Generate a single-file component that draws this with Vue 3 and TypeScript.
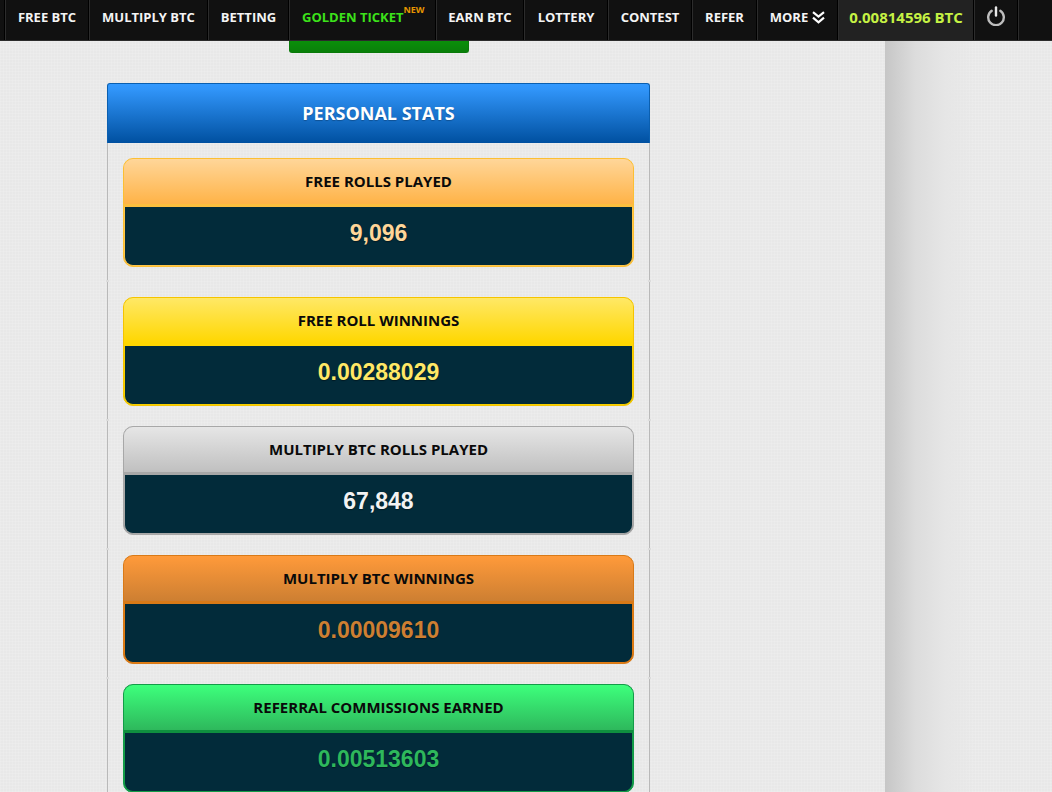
<script setup lang="ts">
interface NavItem { label: string; width: number }
interface Stat { title: string; value: string; tone: string; top: number }

const navItems: NavItem[] = [
  { label: 'FREE BTC', width: 84 },
  { label: 'MULTIPLY BTC', width: 119 },
  { label: 'BETTING', width: 81 },
]
const navItems2: NavItem[] = [
  { label: 'EARN BTC', width: 88 },
  { label: 'LOTTERY', width: 84 },
  { label: 'CONTEST', width: 84 },
  { label: 'REFER', width: 65 },
]
const stats: Stat[] = [
  { title: 'FREE ROLLS PLAYED', value: '9,096', tone: 'peach', top: 15 },
  { title: 'FREE ROLL WINNINGS', value: '0.00288029', tone: 'yellow', top: 16 },
  { title: 'MULTIPLY BTC ROLLS PLAYED', value: '67,848', tone: 'silver', top: 6 },
  { title: 'MULTIPLY BTC WINNINGS', value: '0.00009610', tone: 'bronze', top: 6 },
  { title: 'REFERRAL COMMISSIONS EARNED', value: '0.00513603', tone: 'green', top: 6 },
]
</script>

<template>
  <div class="page">
    <nav class="nav">
      <a v-for="n in navItems" :key="n.label" class="cell" :style="{ width: n.width + 'px' }">{{ n.label }}</a>
      <a class="cell gold"><span class="gold-text">GOLDEN TICKET<sup class="new">NEW</sup></span></a>
      <a v-for="n in navItems2" :key="n.label" class="cell" :style="{ width: n.width + 'px' }">{{ n.label }}</a>
      <a class="cell more">
        MORE
        <svg class="chev" width="13" height="13" viewBox="0 0 13 13" fill="none" stroke="#fff" stroke-width="2.200">
          <path d="M1 1.200l5.500 4.300 5.500-4.300" />
          <path d="M1 6.700l5.500 4.600 5.500-4.600" />
        </svg>
      </a>
      <a class="cell balance">0.00814596 BTC</a>
      <a class="cell power">
        <svg width="20" height="20" viewBox="0 0 20 20" fill="none" stroke-width="2.400" stroke-linecap="round">
          <path d="M5.700 4.800a7.800 7.800 0 1 0 8.600 0" stroke="#bdbdbd" />
          <path d="M10 1.500v8" stroke="#e8e8e8" />
        </svg>
      </a>
    </nav>

    <div class="body">
      <main class="main">
        <div class="tab"></div>
        <section class="panel">
          <h2 class="panel-title">PERSONAL STATS</h2>
          <div v-for="s in stats" :key="s.title" class="row" :style="{ paddingTop: s.top + 'px' }">
            <div class="card" :class="s.tone">
              <div class="card-head">{{ s.title }}</div>
              <div class="card-value">{{ s.value }}</div>
            </div>
          </div>
        </section>
      </main>
      <aside class="side"></aside>
    </div>
  </div>
</template>

<style>
html, body { margin: 0; height: 100%; overflow: hidden; background: #e8e8e8; }
</style>

<style scoped>
.page {
  width: 1052px;
  height: 792px;
  overflow: hidden;
  font-family: "Open Sans", "Liberation Sans", sans-serif;
  background-color: #e8e8e8;
  background-image: repeating-linear-gradient(0deg, rgba(255,255,255,.12) 0 1px, transparent 1px 3px),
    repeating-linear-gradient(90deg, rgba(255,255,255,.12) 0 1px, transparent 1px 3px);
}
.nav {
  height: 40px;
  display: flex;
  background: #111;
  border-bottom: 1px solid #2b2b2b;
  padding-left: 5px;
}
.cell {
  box-sizing: border-box;
  height: 40px;
  flex: none;
  display: flex;
  align-items: center;
  justify-content: center;
  border-left: 1px solid #2c2c2c;
  box-shadow: -1px 0 0 #000;
  color: #f4f4f4;
  font-size: 13px;
  font-weight: 700;
  white-space: nowrap;
  padding: 0 1px 6px 0;
}
.gold { width: 147px; justify-content: flex-start; padding-left: 12px; }
.gold-text { color: #3ce21a; position: relative; }
.new {
  position: absolute;
  left: 100%;
  top: -3px;
  color: #e69500;
  font-size: 9px;
  line-height: 10px;
}
.more { width: 81px; gap: 4px; }
.chev { margin-top: 1px; }
.balance { width: 136px; background: #222; color: #c6f244; font-size: 15px; }
.power { width: 44px; padding: 0 2px 9px 0; }
.nav::after {
  content: "";
  width: 1px;
  height: 40px;
  background: #2c2c2c;
  box-shadow: -1px 0 0 #000;
}
.body { display: flex; height: 751px; }
.main { width: 885px; flex: none; }
.side { flex: 1; background: linear-gradient(90deg, #c6c6c6 0, #dcdcdc 30px, #e6e6e6 60px, transparent 90px); }
.tab {
  width: 180px;
  height: 12px;
  margin-left: 289px;
  box-sizing: border-box;
  background: linear-gradient(#0a8f0a, #0a800a);
  border: 1px solid #0a7a0a;
  border-top: 0;
  border-radius: 0 0 3px 3px;
}
.panel { width: 543px; margin: 30px 0 0 107px; }
.panel-title {
  margin: 0;
  height: 60px;
  box-sizing: border-box;
  display: flex;
  align-items: center;
  justify-content: center;
  color: #fff;
  font-size: 18px;
  font-weight: 700;
  padding-bottom: 2px;
  border: 1px solid #0a5fb0;
  border-bottom: 0;
  border-radius: 3px 3px 0 0;
  background: linear-gradient(#3399ff, #3094f8 10%, #0050a0);
  text-shadow: 0 1px 1px rgba(0,0,0,.25);
}
.row {
  position: relative;
  box-sizing: border-box;
  padding: 0 15px 14px;
  border-left: 1px solid #b9b9b9;
  border-right: 1px solid #b9b9b9;
}
.row + .row::before,
.row + .row::after {
  content: "";
  position: absolute;
  top: -1px;
  width: 3px;
  height: 2px;
  background: #dcdcdc;
}
.row + .row::before { left: -2px; }
.row + .row::after { right: -2px; }
.card {
  width: 511px;
  height: 109px;
  box-sizing: border-box;
  border: 1px solid;
  border-radius: 10px;
  overflow: hidden;
  display: flex;
  flex-direction: column;
}
.card-head {
  flex: none;
  height: 43px;
  padding-bottom: 2px;
  box-sizing: content-box;
  display: flex;
  align-items: center;
  justify-content: center;
  color: #0a0a0a;
  font-size: 15px;
  font-weight: 700;
  border-bottom: 3px solid;
}
.card-value {
  flex: 1;
  box-sizing: border-box;
  display: flex;
  align-items: center;
  justify-content: center;
  background: #022b3a;
  border: 1px solid;
  border-top: 0;
  border-radius: 0 0 9px 9px;
  font-family: "Liberation Sans", Arial, sans-serif;
  font-size: 23px;
  font-weight: 700;
  padding-bottom: 6px;
  text-shadow: 0 1px 1px rgba(0,0,0,.4);
}
.peach { border-color: #fcbf33; background: #ffc64a; }
.peach .card-head { background: linear-gradient(#ffd699, #ffb347); border-bottom-color: #fcbf3f; }
.peach .card-value { color: #ffd699; border-color: #ffc64a; }
.yellow { border-color: #f5c400; background: #f5cf00; }
.yellow .card-head { background: linear-gradient(#ffe866, #ffd700); border-bottom-color: #ffd700; }
.yellow .card-value { color: #ffe866; border-color: #f5cf00; }
.silver { border-color: #a8a8a8; background: #a8a8a8; }
.silver .card-head { background: linear-gradient(#e6e6e6, #c0c0c0); border-bottom-color: #a8a8a8; }
.silver .card-value { color: #f2f2f2; border-color: #a8a8a8; }
.bronze { border-color: #d97a17; background: #e07c14; }
.bronze .card-head { background: linear-gradient(#ff9a3a, #cd7f32); border-bottom-color: #d97a17; }
.bronze .card-value { color: #cd7f32; border-color: #e07c14; }
.green { border-color: #139c48; background: #139c48; }
.green .card-head { background: linear-gradient(#3dff7c, #2eb85c); border-bottom-color: #0f8f3f; }
.green .card-value { color: #2eb85c; border-color: #139c48; }
</style>
